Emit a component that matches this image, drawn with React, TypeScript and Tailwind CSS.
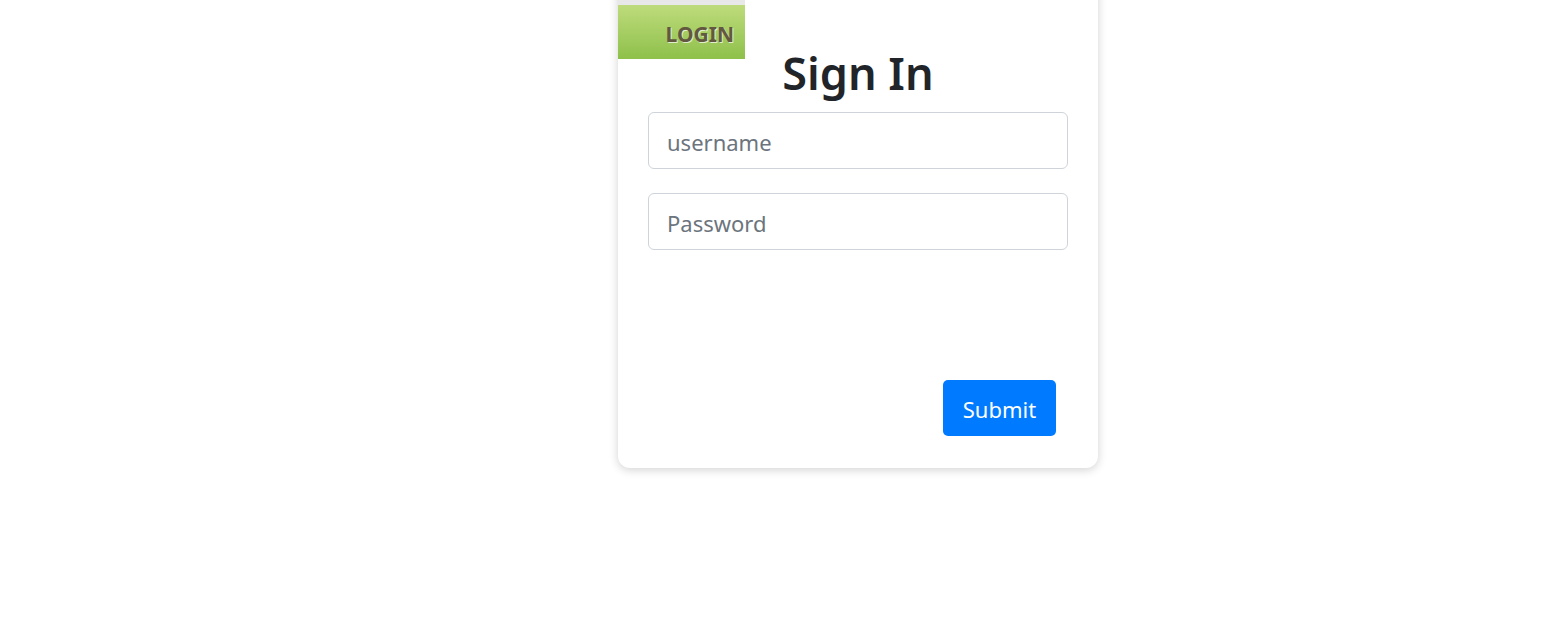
import { useState } from "react";

function App() {
  const [username, setUsername] = useState("");
  const [password, setPassword] = useState("");

  return (
    <div className="min-h-screen bg-white font-['Noto_Sans',sans-serif]">
      {/* card sits a bit above the top of the page */}
      <div className="relative ml-[618px] -mt-[20px] w-[480px] rounded-[12px] bg-white px-[30px] pb-[32px] pt-[65px] shadow-[0_2px_10px_rgba(0,0,0,0.18)]">
        {/* ribbon over the corner */}
        <div className="absolute left-0 top-[20px] flex h-[59px] w-[127px] items-center justify-end border-t-[5px] border-[#e8e8e8] bg-gradient-to-b from-[#bedb7b] to-[#8ec04a] pr-[11px] pt-[5px]">
          <span className="text-[21px] font-bold text-[#62583f] [text-shadow:1px_1px_0_rgba(255,255,255,0.7)]">
            LOGIN
          </span>
        </div>

        <h1 className="mb-[12px] text-center text-[45px] font-semibold leading-[55px] text-[#212529]">
          Sign In
        </h1>

        <form
          className="flex flex-col"
          onSubmit={(e) => e.preventDefault()}
        >
          <input
            type="text"
            placeholder="username"
            value={username}
            onChange={(e) => setUsername(e.target.value)}
            className="h-[57px] w-full rounded-[6px] border border-[#ced4da] px-[18px] pt-[3px] text-[22px] text-[#495057] outline-none placeholder:text-[#6c757d]"
          />
          <input
            type="password"
            placeholder="Password"
            value={password}
            onChange={(e) => setPassword(e.target.value)}
            className="mt-[24px] h-[57px] w-full rounded-[6px] border border-[#ced4da] px-[18px] pt-[2px] text-[22px] text-[#495057] outline-none placeholder:text-[#6c757d]"
          />

          <div className="mt-[130px] flex justify-end pr-[12px]">
            <button
              type="submit"
              className="h-[56px] w-[113px] rounded-[5px] bg-[#007bff] pt-[3px] text-[22px] text-white"
            >
              Submit
            </button>
          </div>
        </form>
      </div>
    </div>
  );
}

export default App;
